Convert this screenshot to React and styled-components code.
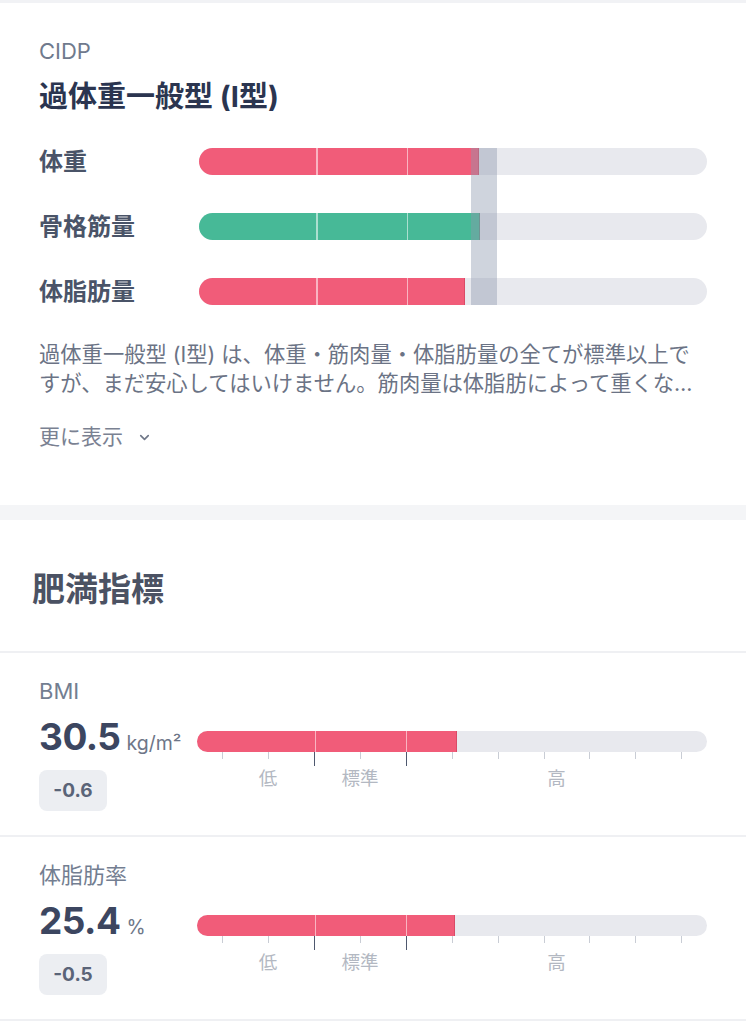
import React from "react";
import styled, { createGlobalStyle } from "styled-components";
import { ChevronDown } from "lucide-react";

const GlobalStyle = createGlobalStyle`
    body {
        margin: 0;
        background: #fff;
        font-family: "Inter", "Noto Sans CJK JP", sans-serif;
        -webkit-font-smoothing: antialiased;
    }
`;

const RED = "#f15c79";
const GREEN = "#47b997";

const Page = styled.div`
    width: 746px;
    border-top: 3px solid #f1f2f5;
`;

const TypeCard = styled.section`
    padding: 34px 39px 54px;
`;

const Caption = styled.div`
    font-size: 22px;
    line-height: 28px;
    color: #6f7a8d;
`;

const Title = styled.h2`
    margin: 14px 0 0;
    font-size: 29px;
    line-height: 36px;
    font-weight: 700;
    color: #2b3550;
`;

const Chart = styled.div`
    display: grid;
    grid-template-columns: 160px 1fr;
    grid-template-rows: repeat(3, 27px);
    row-gap: 38px;
    margin-top: 33px;
    align-items: center;
`;

const RowLabel = styled.div`
    grid-column: 1;
    grid-row: ${(p) => p.$row};
    font-size: 24px;
    line-height: 27px;
    font-weight: 700;
    color: #4a5468;
`;

const Track = styled.div`
    position: relative;
    grid-column: 2;
    grid-row: ${(p) => p.$row || "auto"};
    height: ${(p) => p.$h}px;
    border-radius: ${(p) => p.$h / 2}px;
    background: #e8e9ee;
    overflow: hidden;
`;

const Fill = styled.div`
    height: 100%;
    background: ${(p) => p.$color};
    box-shadow: inset -1px 0 0 rgba(150, 20, 50, 0.25);
`;

const Divider = styled.span`
    position: absolute;
    top: 0;
    bottom: 0;
    width: 1.5px;
    background: rgba(255, 255, 255, 0.55);
`;

const Marker = styled.div`
    grid-column: 2;
    grid-row: 1 / span 3;
    align-self: stretch;
    margin-left: 53.5%;
    width: 5.1%;
    background: rgba(140, 152, 175, 0.42);
    z-index: 1;
    pointer-events: none;
`;

const Description = styled.p`
    margin: 35px 0 0;
    font-size: 21.3px;
    line-height: 29px;
    color: #6b7385;
    display: -webkit-box;
    -webkit-line-clamp: 2;
    -webkit-box-orient: vertical;
    overflow: hidden;
`;

const MoreLink = styled.button`
    display: flex;
    align-items: center;
    gap: 14px;
    margin-top: 25px;
    padding: 0;
    border: 0;
    background: none;
    font-family: inherit;
    font-size: 21px;
    line-height: 28px;
    color: #7a8192;
`;

const Gap = styled.div`
    height: 15px;
    background: #f4f5f7;
`;

const SectionHead = styled.h2`
    margin: 0;
    padding: 47px 32px 40px;
    font-size: 33px;
    line-height: 44px;
    font-weight: 700;
    color: #4b5263;
    border-bottom: 2px solid #eff0f3;
`;

const Metric = styled.div`
    padding: 24px 39px 24px;
    border-bottom: 2px solid #eff0f3;
`;

const MetricName = styled.div`
    font-size: 22px;
    line-height: 28px;
    color: #737e91;
`;

const MetricBody = styled.div`
    display: flex;
    margin-top: 10px;
`;

const ValueCol = styled.div`
    width: 158px;
    flex-shrink: 0;
`;

const Value = styled.div`
    display: flex;
    align-items: baseline;
    gap: 6px;
    height: 44px;
    line-height: 44px;
`;

const Number = styled.span`
    font-size: 37px;
    font-weight: 700;
    letter-spacing: -0.5px;
    color: #3c4660;
`;

const Unit = styled.span`
    font-size: 19.5px;
    color: #6e7688;
`;

const Badge = styled.div`
    display: inline-flex;
    align-items: center;
    justify-content: center;
    margin-top: 11px;
    width: 68px;
    height: 41px;
    border-radius: 8px;
    background: #eceef2;
    font-size: 19px;
    font-weight: 700;
    color: #5a6478;
`;

const Scale = styled.div`
    flex: 1;
    padding-top: 16px;
`;

const Ticks = styled.div`
    display: flex;
    justify-content: space-between;
    align-items: flex-start;
    padding: 0 4.9%;
    height: 14px;
`;

const Tick = styled.span`
    width: ${(p) => (p.$major ? 1.5 : 1)}px;
    height: ${(p) => (p.$major ? 14 : 7)}px;
    background: ${(p) => (p.$major ? "#4e586e" : "#c9cdd5")};
`;

const Zones = styled.div`
    display: grid;
    grid-template-columns: 4.9% repeat(10, 1fr) 4.9%;
    margin-top: 1px;
`;

const Zone = styled.span`
    grid-column: ${(p) => p.$span};
    text-align: center;
    font-size: 18.5px;
    line-height: 22px;
    color: #b3b8c2;
`;

const dividers = [23.1, 40.9];

const Bar = ({ h, pct, color, row }) => (
    <Track $h={h} $row={row}>
        <Fill $color={color} style={{ width: `${pct}%` }} />
        {dividers.map((d) => (
            <Divider key={d} style={{ left: `${d}%` }} />
        ))}
    </Track>
);

const bodyRows = [
    { label: "体重", pct: 55.2, color: RED },
    { label: "骨格筋量", pct: 55.3, color: GREEN },
    { label: "体脂肪量", pct: 52.3, color: RED },
];

const metrics = [
    { name: "BMI", value: "30.5", unit: "kg/m²", diff: "-0.6", pct: 51 },
    { name: "体脂肪率", value: "25.4", unit: "%", diff: "-0.5", pct: 50.6 },
];

const App = () => {
    return (
        <Page>
            <GlobalStyle />
            <TypeCard>
                <Caption>CIDP</Caption>
                <Title>過体重一般型 (I型)</Title>
                <Chart>
                    {bodyRows.map((r, i) => (
                        <React.Fragment key={r.label}>
                            <RowLabel $row={i + 1}>{r.label}</RowLabel>
                            <Bar h={27} pct={r.pct} color={r.color} row={i + 1} />
                        </React.Fragment>
                    ))}
                    <Marker />
                </Chart>
                <Description>
                    過体重一般型 (I型) は、体重・筋肉量・体脂肪量の全てが標準以上ですが、まだ安心してはいけません。筋肉量は体脂肪によって重くなっている可能性があります。
                </Description>
                <MoreLink>
                    更に表示
                    <ChevronDown size={15} strokeWidth={2.6} color="#6f7788" />
                </MoreLink>
            </TypeCard>

            <Gap />

            <SectionHead>肥満指標</SectionHead>
            {metrics.map((m) => (
                <Metric key={m.name}>
                    <MetricName>{m.name}</MetricName>
                    <MetricBody>
                        <ValueCol>
                            <Value>
                                <Number>{m.value}</Number>
                                <Unit>{m.unit}</Unit>
                            </Value>
                            <Badge>{m.diff}</Badge>
                        </ValueCol>
                        <Scale>
                            <Bar h={21} pct={m.pct} color={RED} />
                            <Ticks>
                                {Array.from({ length: 11 }).map((_, i) => (
                                    <Tick key={i} $major={i === 2 || i === 4} />
                                ))}
                            </Ticks>
                            <Zones>
                                <Zone $span="2 / 4">低</Zone>
                                <Zone $span="4 / 6">標準</Zone>
                                <Zone $span="6 / 13">高</Zone>
                            </Zones>
                        </Scale>
                    </MetricBody>
                </Metric>
            ))}
        </Page>
    );
};

export default App;
